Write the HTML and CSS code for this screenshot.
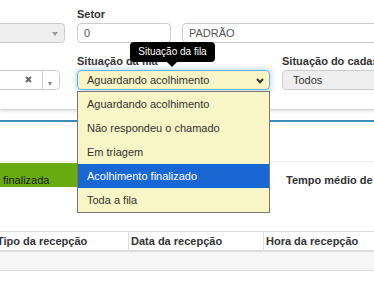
FILE: index.html
```html
<!DOCTYPE html>
<html lang="pt-BR">
<head>
<meta charset="utf-8">
<title>Fila</title>
<link rel="stylesheet" href="styles.css">
</head>
<body>
<div class="panel">
  <div class="row row1">
    <div class="field fa1">
      <div class="control grey-select">
        <span class="tri tri-a"></span>
      </div>
    </div>
    <div class="field fb1">
      <label class="lbl">Setor</label>
      <div class="control input">0</div>
    </div>
    <div class="field fc1">
      <div class="control input">PADRÃO</div>
    </div>
  </div>
  <div class="row row2">
    <div class="field fa2">
      <div class="control s2">
        <span class="s2-clear">
          <svg width="7" height="7" viewBox="0 0 7 7"><path d="M1 1 L6 6 M6 1 L1 6" stroke="#666" stroke-width="1.8" fill="none"/></svg>
        </span>
        <span class="s2-arrow"><span class="tri tri-b"></span></span>
      </div>
    </div>
    <div class="field fb2">
      <label class="lbl">Situação da fila</label>
      <div class="selwrap">
        <div class="control sel-focus">
          <span>Aguardando acolhimento</span>
          <svg class="chev" width="8" height="6" viewBox="0 0 8 6"><path d="M1 1 L4 4.2 L7 1" stroke="#333" stroke-width="2" fill="none"/></svg>
        </div>
        <ul class="dropdown">
          <li>Aguardando acolhimento</li>
          <li>Não respondeu o chamado</li>
          <li>Em triagem</li>
          <li class="active">Acolhimento finalizado</li>
          <li>Toda a fila</li>
        </ul>
      </div>
      <div class="tooltip">Situação da fila</div>
    </div>
    <div class="field fc2">
      <label class="lbl">Situação do cadastro</label>
      <div class="control grey-todos">Todos</div>
    </div>
  </div>
</div>

<div class="blue-line"></div>

<div class="summary">
  <div class="bar-green">finalizada</div>
  <div class="tempo">Tempo médio de espera</div>
</div>

<table class="grid">
  <colgroup>
    <col class="c1"><col class="c2"><col class="c3">
  </colgroup>
  <thead>
    <tr><th>Tipo da recepção</th><th>Data da recepção</th><th>Hora da recepção</th></tr>
  </thead>
  <tbody>
    <tr><td></td><td></td><td></td></tr>
  </tbody>
</table>
</body>
</html>
```

FILE: styles.css
```css
* { box-sizing: border-box; }

html, body {
  margin: 0;
  padding: 0;
  background: #fff;
  overflow: hidden;
}

body {
  width: 374px;
  height: 285px;
  font-family: "Liberation Sans", Arial, sans-serif;
  font-size: 11px;
  color: #333;
}

.panel {
  padding-top: 7px;
  padding-bottom: 19px;
  border-bottom: 1px solid #d6d6d6;
  box-shadow: 0 1px 3px rgba(0, 0, 0, 0.14);
}

.row {
  display: flex;
  align-items: flex-end;
}

.row1 { margin-bottom: 11px; }

.field {
  flex: none;
  position: relative;
  display: flex;
  flex-direction: column;
}

.lbl {
  display: block;
  font-weight: bold;
  line-height: 15px;
  margin-bottom: 1px;
  white-space: nowrap;
}

.control {
  height: 20px;
  border: 1px solid #ccc;
  border-radius: 4px;
  line-height: 18px;
  white-space: nowrap;
}

/* row 1 */
.fa1 { margin-left: -10px; width: 75px; }
.fb1 { margin-left: 12px; width: 94px; }
.fc1 { margin-left: 11px; width: 260px; }

.grey-select {
  background: #eee;
  display: flex;
  align-items: center;
  justify-content: flex-end;
  padding-right: 6px;
}

.tri {
  display: block;
  width: 0;
  height: 0;
  border-left: 3px solid transparent;
  border-right: 3px solid transparent;
  border-top: 4px solid #999;
}

.tri-a { margin-top: 1px; }

.input {
  padding-left: 6px;
  color: #555;
  background: #fff;
}

/* row 2 */
.fa2 { margin-left: -10px; width: 70px; }
.fb2 { margin-left: 17px; width: 193px; }
.fc2 { margin-left: 12px; width: 160px; }

.s2 {
  display: flex;
  justify-content: flex-end;
  background: #fff;
}

.s2-clear {
  width: 18px;
  display: flex;
  align-items: center;
  justify-content: flex-start;
  padding-left: 1px;
  padding-bottom: 1px;
}

.s2-arrow {
  width: 17px;
  border-left: 1px solid #ccc;
  display: flex;
  justify-content: center;
  padding-top: 11px;
  padding-right: 3px;
}

.tri-b {
  border-left-width: 2.5px;
  border-right-width: 2.5px;
  border-top-width: 4px;
  border-top-color: #888;
}

.selwrap { position: relative; }

.sel-focus {
  background: #f8f5c6;
  border-color: #66afe9;
  box-shadow: 0 0 6px rgba(102, 175, 233, 0.6);
  padding-left: 9px;
  padding-right: 5px;
  display: flex;
  align-items: center;
  justify-content: space-between;
}

.chev { display: block; margin-top: 1px; }

.dropdown {
  position: absolute;
  top: 21px;
  left: 0;
  width: 193px;
  margin: 0;
  padding: 0;
  list-style: none;
  background: #f8f5c6;
  border: 1px solid #767676;
  z-index: 5;
}

.dropdown li {
  height: 24px;
  line-height: 24px;
  padding-left: 9px;
  color: #333;
  white-space: nowrap;
}

.dropdown li.active {
  background: #1967d2;
  color: #fff;
}

.tooltip {
  position: absolute;
  top: -12px;
  left: 53px;
  width: 85px;
  height: 20px;
  line-height: 20px;
  text-align: center;
  background: #000;
  color: #fff;
  font-size: 10px;
  border-radius: 4px;
  z-index: 6;
}

.tooltip::after {
  content: "";
  position: absolute;
  left: 37px;
  bottom: -5px;
  border-left: 5px solid transparent;
  border-right: 5px solid transparent;
  border-top: 5px solid #000;
}

.grey-todos {
  background: #eee;
  padding-left: 10px;
  color: #333;
}

/* below panel */
.blue-line {
  margin-top: 10px;
  height: 2px;
  background: #3c8dbc;
}

.summary {
  margin-top: 39px;
  border-top: 1px solid #eee;
  padding-top: 1px;
  display: flex;
  align-items: flex-start;
}

.bar-green {
  flex: none;
  width: 77px;
  height: 24px;
  background: #68ab10;
  color: #1a1a1a;
  padding-top: 10px;
  padding-left: 3px;
  line-height: 14px;
  white-space: nowrap;
}

.tempo {
  flex: none;
  margin-left: 209px;
  padding-top: 10px;
  line-height: 14px;
  font-weight: bold;
  color: #333;
  white-space: nowrap;
}

.grid {
  margin-top: 44px;
  margin-left: -6px;
  width: 520px;
  border-collapse: collapse;
  table-layout: fixed;
}

.c1 { width: 134px; }
.c2 { width: 135px; }
.c3 { width: 251px; }

.grid th {
  text-align: left;
  font-weight: bold;
  height: 19px;
  line-height: 18px;
  padding: 0 0 0 2px;
  border-top: 1px solid #ddd;
  border-left: 1px solid #ddd;
  border-bottom: 2px solid #ddd;
  white-space: nowrap;
  overflow: hidden;
  color: #333;
}

.grid td {
  height: 19px;
  background: #f6f6f6;
  border-bottom: 1px solid #ddd;
  padding: 0;
}
```
